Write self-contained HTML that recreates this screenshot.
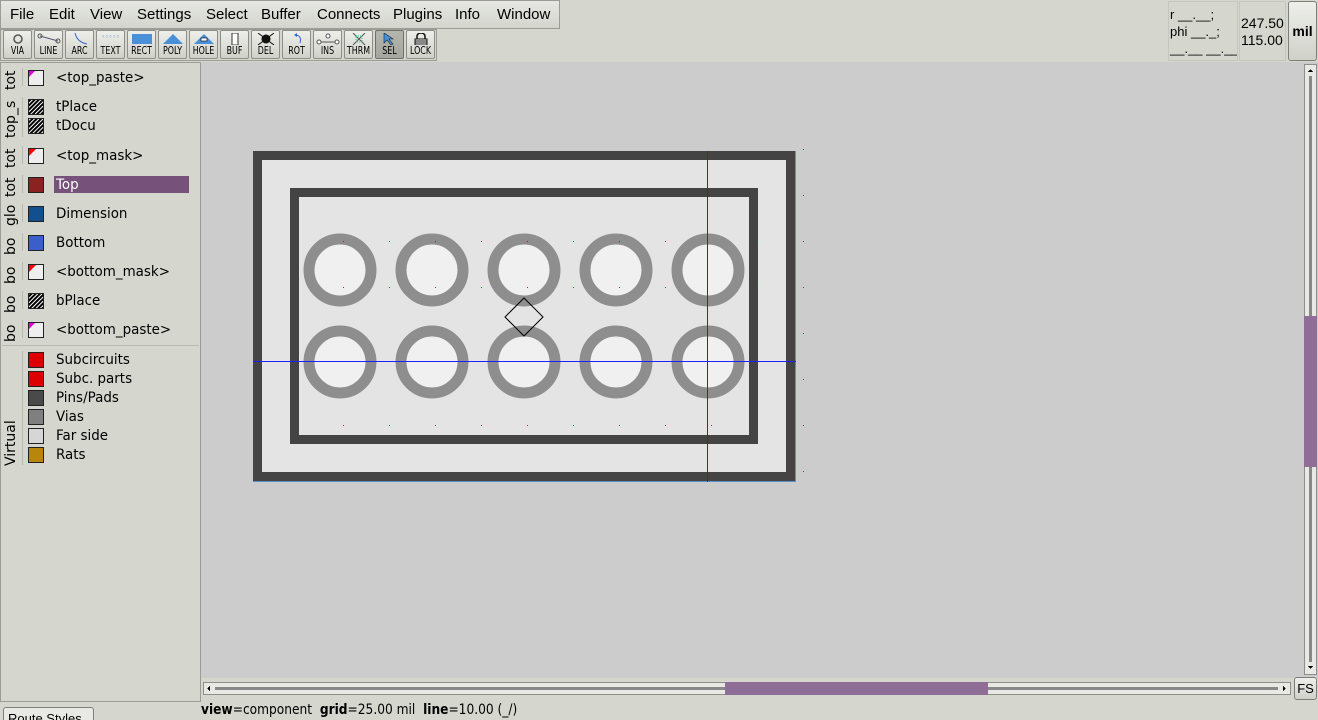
<!DOCTYPE html>
<html><head><meta charset="utf-8"><style>
*{margin:0;padding:0;box-sizing:border-box}
html,body{width:1318px;height:720px;overflow:hidden}
body{background:#d5d7cf;font-family:"Liberation Sans","DejaVu Sans",sans-serif;position:relative;color:#000}
.abs{position:absolute}
.menu{left:0;top:0;width:560px;height:29px;border:1px solid #9a9c95;background:linear-gradient(#e6e7e2,#d3d5cd);}
.menu span{position:absolute;top:5px;font-size:15px}
.tb{position:absolute;top:30px;width:29px;height:29px;border:1px solid #8d8f88;border-radius:2px;background:linear-gradient(#eeefea,#cfd1c9);font-size:11px;text-align:center;font-family:"DejaVu Sans Condensed","DejaVu Sans",sans-serif}
.tb b{position:absolute;bottom:1px;left:-3px;right:-3px;font-weight:normal;transform:scaleX(.8)}
.tb i{position:absolute;left:0;right:0;top:2px;height:12px}
.lay{position:absolute;left:56px;font-size:14px;font-family:"DejaVu Sans",sans-serif;transform-origin:left;transform:scaleX(.96)}
.vt{position:absolute;left:3px;writing-mode:vertical-rl;transform:rotate(180deg);font-size:14px;font-family:"DejaVu Sans",sans-serif;white-space:nowrap;overflow:hidden}
.sep{position:absolute;left:22px;width:1px;background:#b8bab3}
</style></head><body>
<div class="abs menu">
<span style="left:9px">File</span><span style="left:48px">Edit</span><span style="left:89px">View</span><span style="left:136px">Settings</span><span style="left:205px">Select</span><span style="left:260px">Buffer</span><span style="left:316px">Connects</span><span style="left:392px">Plugins</span><span style="left:454px">Info</span><span style="left:496px">Window</span>
</div>
<div class="abs" style="left:0;top:29px;width:437px;height:32px;border:1px solid #9a9c95;background:#d5d7cf"></div>
<div class="tb" style="left:3px"><i><svg width="12" height="12"><circle cx="6" cy="6" r="4" fill="none" stroke="#555" stroke-width="1.5"/></svg></i><b>VIA</b></div>
<div class="tb" style="left:34px"><i><svg width="26" height="12"><line x1="4" y1="3" x2="22" y2="8" stroke="#557" /><circle cx="4" cy="3" r="2" fill="none" stroke="#555"/><circle cx="22" cy="8" r="2" fill="none" stroke="#555"/></svg></i><b>LINE</b></div>
<div class="tb" style="left:65px"><i><svg width="26" height="12"><path d="M8 0 Q10 9 20 11" fill="none" stroke="#36c"/></svg></i><b>ARC</b></div>
<div class="tb" style="left:96px"><i style="font-size:7px;color:#36c;letter-spacing:0">◦◦◦◦◦</i><b>TEXT</b></div>
<div class="tb" style="left:127px"><i><svg width="26" height="12"><rect x="3" y="1" width="20" height="10" fill="#4a90d9"/></svg></i><b>RECT</b></div>
<div class="tb" style="left:158px"><i><svg width="26" height="12"><path d="M3 11 L13 1 L23 11Z" fill="#4a90d9"/></svg></i><b>POLY</b></div>
<div class="tb" style="left:189px"><i><svg width="26" height="12"><path d="M3 11 L13 1 L23 11Z" fill="#4a90d9"/><rect x="10" y="5" width="6" height="3" fill="#fff" stroke="#000" stroke-width=".6"/></svg></i><b>HOLE</b></div>
<div class="tb" style="left:220px"><i><svg width="26" height="12"><rect x="10" y="0" width="6" height="12" fill="#fff" stroke="#333"/></svg></i><b>BUF</b></div>
<div class="tb" style="left:251px"><i><svg width="26" height="12"><circle cx="13" cy="6" r="4.5" fill="#111"/><path d="M5 0 L21 12 M21 0 L5 12" stroke="#111"/></svg></i><b>DEL</b></div>
<div class="tb" style="left:282px"><i><svg width="26" height="12"><path d="M12 2 Q18 3 16 10" fill="none" stroke="#36c"/><path d="M10 2 L13 0 L13 4Z" fill="#36c"/></svg></i><b>ROT</b></div>
<div class="tb" style="left:313px"><i><svg width="26" height="12"><path d="M4 9 H22" stroke="#555"/><circle cx="4" cy="9" r="2" fill="#fff" stroke="#555"/><circle cx="22" cy="9" r="2" fill="#fff" stroke="#555"/><circle cx="13" cy="3" r="2" fill="#fff" stroke="#555"/></svg></i><b>INS</b></div>
<div class="tb" style="left:344px"><i><svg width="26" height="12"><path d="M7 0 L19 12 M19 0 L7 12" stroke="#555"/><rect x="10" y="3" width="6" height="6" fill="none" stroke="#3c9" stroke-dasharray="1 1"/></svg></i><b>THRM</b></div>
<div class="tb" style="left:375px;background:linear-gradient(#b4b6ad,#a5a79f);border-color:#6f716a"><i><svg width="26" height="12"><path d="M7 0 L7 10 L10 7 L14 12 L16 11 L12 6 L16 6Z" fill="#4a90d9" stroke="#123" stroke-width=".6"/></svg></i><b>SEL</b></div>
<div class="tb" style="left:406px"><i><svg width="26" height="12"><path d="M9 6 V3 A4 3 0 0 1 17 3 V6" fill="none" stroke="#111" stroke-width="1.5"/><rect x="7" y="6" width="12" height="6" fill="#fff" stroke="#111"/><path d="M7 8 H19 M7 10 H19" stroke="#111"/></svg></i><b>LOCK</b></div>

<div class="abs" style="left:1168px;top:1px;width:70px;height:60px;border:1px solid #c4c6bf;font-size:13px;line-height:17px;padding:4px 0 0 1px;font-family:'Liberation Sans',sans-serif;white-space:nowrap;overflow:hidden">r __.__;<br>phi __._;<br>__.__ __.__</div>
<div class="abs" style="left:1239px;top:1px;width:47px;height:60px;border:1px solid #c4c6bf;font-size:14px;line-height:17px;padding:13px 0 0 1px;font-family:'Liberation Sans',sans-serif">247.50<br>115.00</div>
<div class="abs" style="left:1288px;top:1px;width:29px;height:60px;border:1px solid #7d7f78;border-radius:3px;background:linear-gradient(#eeefea,#cfd1c9);font-size:14px;font-weight:bold;text-align:center;padding-top:21px;font-family:'Liberation Sans',sans-serif">mil</div>

<div class="abs" style="left:0;top:62px;width:201px;height:640px;border:1px solid #9a9c95;background:#d5d7cf"></div>
<div class="vt" style="top:66px;height:24px">tot</div>
<div class="vt" style="top:95px;height:43px">top_s</div>
<div class="vt" style="top:144px;height:24px">tot</div>
<div class="vt" style="top:173px;height:24px">tot</div>
<div class="vt" style="top:202px;height:24px">glo</div>
<div class="vt" style="top:231px;height:24px">bo</div>
<div class="vt" style="top:260px;height:24px">bo</div>
<div class="vt" style="top:289px;height:24px">bo</div>
<div class="vt" style="top:318px;height:24px">bo</div>
<div class="vt" style="top:400px;height:66px">Virtual</div>
<div class="sep" style="top:68px;height:18px"></div><div class="sep" style="top:97px;height:40px"></div><div class="sep" style="top:146px;height:18px"></div><div class="sep" style="top:175px;height:18px"></div><div class="sep" style="top:204px;height:18px"></div><div class="sep" style="top:233px;height:18px"></div><div class="sep" style="top:262px;height:18px"></div><div class="sep" style="top:291px;height:18px"></div><div class="sep" style="top:320px;height:18px"></div><div class="sep" style="top:351px;height:114px"></div>
<div class="abs" style="left:2px;top:345px;width:197px;height:1px;background:#b8bab3"></div>
<svg class="abs" style="left:0;top:0" width="60" height="470">
<defs><pattern id="h" width="3" height="3" patternUnits="userSpaceOnUse" patternTransform="rotate(45)"><rect width="3" height="3" fill="#000"/><rect width="1" height="3" fill="#fff"/></pattern></defs>
<g stroke="#222"><rect x="28.5" y="70.5" width="15" height="15" fill="#eee"/><path d="M29 71 h6 l-6 6z" fill="#d0d" stroke="none"/>
<rect x="28.5" y="99.5" width="15" height="15" fill="url(#h)"/>
<rect x="28.5" y="118.5" width="15" height="15" fill="url(#h)"/>
<rect x="28.5" y="148.5" width="15" height="15" fill="#eee"/><path d="M29 149 h7 l-7 7z" fill="#f00" stroke="none"/>
<rect x="28.5" y="177.5" width="15" height="15" fill="#8b2222"/>
<rect x="28.5" y="206.5" width="15" height="15" fill="#114f8e"/>
<rect x="28.5" y="235.5" width="15" height="15" fill="#3a5fcd"/>
<rect x="28.5" y="264.5" width="15" height="15" fill="#eee"/><path d="M29 265 h7 l-7 7z" fill="#f00" stroke="none"/>
<rect x="28.5" y="293.5" width="15" height="15" fill="url(#h)"/>
<rect x="28.5" y="322.5" width="15" height="15" fill="#eee"/><path d="M29 323 h6 l-6 6z" fill="#d0d" stroke="none"/>
<rect x="28.5" y="352.5" width="15" height="15" fill="#d00"/>
<rect x="28.5" y="371.5" width="15" height="15" fill="#d00"/>
<rect x="28.5" y="390.5" width="15" height="15" fill="#4a4a4a"/>
<rect x="28.5" y="409.5" width="15" height="15" fill="#7f7f7f"/>
<rect x="28.5" y="428.5" width="15" height="15" fill="#d6d6d6"/>
<rect x="28.5" y="447.5" width="15" height="15" fill="#b8860b"/></g>
</svg>
<div class="abs" style="left:54px;top:176px;width:135px;height:17px;background:#76527a"></div>
<div class="lay" style="top:70px">&lt;top_paste&gt;</div>
<div class="lay" style="top:99px">tPlace</div>
<div class="lay" style="top:118px">tDocu</div>
<div class="lay" style="top:148px">&lt;top_mask&gt;</div>
<div class="lay" style="top:177px;color:#fff">Top</div>
<div class="lay" style="top:206px">Dimension</div>
<div class="lay" style="top:235px">Bottom</div>
<div class="lay" style="top:264px">&lt;bottom_mask&gt;</div>
<div class="lay" style="top:293px">bPlace</div>
<div class="lay" style="top:322px">&lt;bottom_paste&gt;</div>
<div class="lay" style="top:352px">Subcircuits</div>
<div class="lay" style="top:371px">Subc. parts</div>
<div class="lay" style="top:390px">Pins/Pads</div>
<div class="lay" style="top:409px">Vias</div>
<div class="lay" style="top:428px">Far side</div>
<div class="lay" style="top:447px">Rats</div>
<div class="abs" style="left:3px;top:707px;width:91px;height:20px;border:1px solid #7d7f78;border-radius:3px;background:#e8e9e4;font-size:13px;padding:3px 0 0 4px">Route Styles</div>

<div class="abs" style="left:201px;top:62px;width:1117px;height:616px;background:#cccccc"></div>
<svg class="abs" style="left:0;top:0" width="1318" height="720" shape-rendering="crispEdges">
<rect x="253.5" y="151.5" width="542" height="330" fill="#e4e4e4" stroke="#5b8fc9" stroke-width="1"/>
<rect x="257.5" y="155.5" width="533" height="321" fill="none" stroke="#444" stroke-width="9"/>
<rect x="294.5" y="192.5" width="459" height="247" fill="none" stroke="#444" stroke-width="9"/>
<g fill="#f0f0f0" stroke="#8e8e8e" stroke-width="11" shape-rendering="auto">
<circle cx="340" cy="270" r="31"/><circle cx="432" cy="270" r="31"/><circle cx="524" cy="270" r="31"/><circle cx="616" cy="270" r="31"/><circle cx="708" cy="270" r="31"/>
<circle cx="340" cy="362" r="31"/><circle cx="432" cy="362" r="31"/><circle cx="524" cy="362" r="31"/><circle cx="616" cy="362" r="31"/><circle cx="708" cy="362" r="31"/>
</g>
<path d="M524 298 L543 317 L524 336 L505 317Z" fill="none" stroke="#000" stroke-width="1" shape-rendering="auto"/>
<g fill="#ff0000">
<rect x="343" y="241" width="1" height="1"/><rect x="389" y="241" width="1" height="1"/><rect x="435" y="241" width="1" height="1"/><rect x="481" y="241" width="1" height="1"/><rect x="527" y="241" width="1" height="1"/><rect x="573" y="241" width="1" height="1"/><rect x="619" y="241" width="1" height="1"/><rect x="665" y="241" width="1" height="1"/><rect x="757" y="241" width="1" height="1"/><rect x="803" y="241" width="1" height="1"/>
<rect x="343" y="287" width="1" height="1"/><rect x="389" y="287" width="1" height="1"/><rect x="435" y="287" width="1" height="1"/><rect x="481" y="287" width="1" height="1"/><rect x="527" y="287" width="1" height="1"/><rect x="573" y="287" width="1" height="1"/><rect x="619" y="287" width="1" height="1"/><rect x="665" y="287" width="1" height="1"/><rect x="757" y="287" width="1" height="1"/><rect x="803" y="287" width="1" height="1"/>
<rect x="343" y="425" width="1" height="1"/><rect x="389" y="425" width="1" height="1"/><rect x="435" y="425" width="1" height="1"/><rect x="481" y="425" width="1" height="1"/><rect x="527" y="425" width="1" height="1"/><rect x="573" y="425" width="1" height="1"/><rect x="619" y="425" width="1" height="1"/><rect x="665" y="425" width="1" height="1"/><rect x="711" y="425" width="1" height="1"/><rect x="803" y="425" width="1" height="1"/>
<rect x="803" y="149" width="1" height="1"/><rect x="803" y="195" width="1" height="1"/><rect x="803" y="333" width="1" height="1"/><rect x="803" y="379" width="1" height="1"/><rect x="803" y="471" width="1" height="1"/>
</g>
<rect x="253" y="361" width="543" height="1" fill="#2020ff"/>
<rect x="707" y="151" width="1" height="331" fill="#2020ff"/>
<rect x="1304.5" y="64.5" width="12" height="610" fill="#e8e9e4" stroke="#8d8f88"/>
<rect x="1309" y="76" width="3" height="586" fill="#888"/>
<rect x="1304" y="316" width="13" height="151" fill="#8e6e96"/>
<path d="M1308 72 h5 l-2.5 -3z" fill="#000"/><path d="M1308 666 h5 l-2.5 3z" fill="#000"/>
<rect x="203.5" y="682.5" width="1087" height="12" fill="#e8e9e4" stroke="#8d8f88"/>
<rect x="215" y="687" width="1063" height="3" fill="#888"/>
<rect x="725" y="682" width="263" height="13" fill="#8e6e96"/>
<path d="M210 686 v5 l-3 -2.5z" fill="#000"/><path d="M1283 686 v5 l3 -2.5z" fill="#000"/>
</svg>
<div class="abs" style="left:1294px;top:677px;width:23px;height:23px;border:1px solid #7d7f78;border-radius:3px;background:linear-gradient(#eeefea,#cfd1c9);font-size:13px;text-align:center;padding-top:3px">FS</div>
<div class="abs" style="left:201px;top:702px;font-size:14px;font-family:'DejaVu Sans Condensed','DejaVu Sans',sans-serif;white-space:nowrap;transform-origin:left;transform:scaleX(.97)"><b>view</b>=component &nbsp;<b>grid</b>=25.00 mil &nbsp;<b>line</b>=10.00 (_/)</div>
</body></html>
